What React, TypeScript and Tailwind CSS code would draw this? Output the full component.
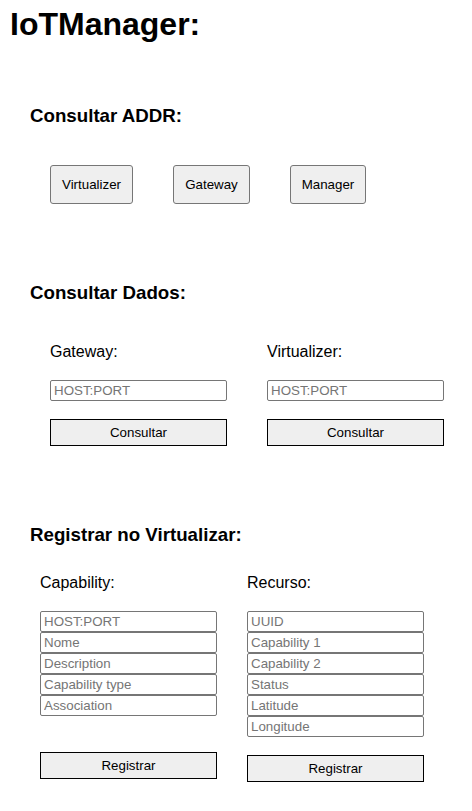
import React from 'react';

const capabilityFields = ['HOST:PORT', 'Nome', 'Description', 'Capability type', 'Association'];
const recursoFields = ['UUID', 'Capability 1', 'Capability 2', 'Status', 'Latitude', 'Longitude'];

function AddrButton({ label, width }: { label: string; width: string }) {
  return (
    <button
      className={`${width} h-[39px] border border-[#767676] rounded-[3px] bg-[#efefef] text-[13.33px] leading-[16px] text-black flex items-center justify-center`}
    >
      {label}
    </button>
  );
}

function TextInput({ placeholder }: { placeholder: string }) {
  return (
    <input
      type="text"
      placeholder={placeholder}
      className="block w-[177px] h-[21px] border border-[#767676] rounded-[2px] px-[3px] text-[13.33px] leading-[16px] text-black placeholder:text-[#757575] outline-none bg-white"
    />
  );
}

function WideButton({ label }: { label: string }) {
  return (
    <button className="block w-[177px] h-[27px] border border-black bg-[#efefef] text-[13.33px] leading-[16px] text-black">
      {label}
    </button>
  );
}

export default function App() {
  return (
    <div className="w-[472px] min-h-[811px] bg-white text-black font-['Liberation_Sans',Arial,sans-serif] flex flex-col">
      <h1 className="pt-[6px] pl-[10px] text-[32px] font-bold leading-[37px]">IoTManager:</h1>

      {/* Consultar ADDR */}
      <h3 className="mt-[62px] ml-[30px] text-[18.72px] font-bold leading-[22px]">Consultar ADDR:</h3>
      <div className="mt-[38px] ml-[50px] flex gap-[40px]">
        <AddrButton label="Virtualizer" width="w-[83px]" />
        <AddrButton label="Gateway" width="w-[77px]" />
        <AddrButton label="Manager" width="w-[76px]" />
      </div>

      {/* Consultar Dados */}
      <h3 className="mt-[78px] ml-[30px] text-[18.72px] font-bold leading-[22px]">Consultar Dados:</h3>
      <div className="mt-[39px] ml-[50px] flex gap-[40px]">
        {['Gateway:', 'Virtualizer:'].map((label) => (
          <div key={label} className="flex flex-col">
            <label className="text-[16px] leading-[18px]">{label}</label>
            <div className="mt-[19px]">
              <TextInput placeholder="HOST:PORT" />
            </div>
            <div className="mt-[18px]">
              <WideButton label="Consultar" />
            </div>
          </div>
        ))}
      </div>

      {/* Registrar no Virtualizar */}
      <h3 className="mt-[78px] ml-[30px] text-[18.72px] font-bold leading-[22px]">Registrar no Virtualizar:</h3>
      <div className="mt-[28px] ml-[40px] flex gap-[30px]">
        <div className="flex flex-col">
          <label className="text-[16px] leading-[18px]">Capability:</label>
          <div className="mt-[19px] flex flex-col">
            {capabilityFields.map((f) => (
              <TextInput key={f} placeholder={f} />
            ))}
          </div>
          <div className="mt-[36px]">
            <WideButton label="Registrar" />
          </div>
        </div>
        <div className="flex flex-col">
          <label className="text-[16px] leading-[18px]">Recurso:</label>
          <div className="mt-[19px] flex flex-col">
            {recursoFields.map((f) => (
              <TextInput key={f} placeholder={f} />
            ))}
          </div>
          <div className="mt-[18px]">
            <WideButton label="Registrar" />
          </div>
        </div>
      </div>
    </div>
  );
}
